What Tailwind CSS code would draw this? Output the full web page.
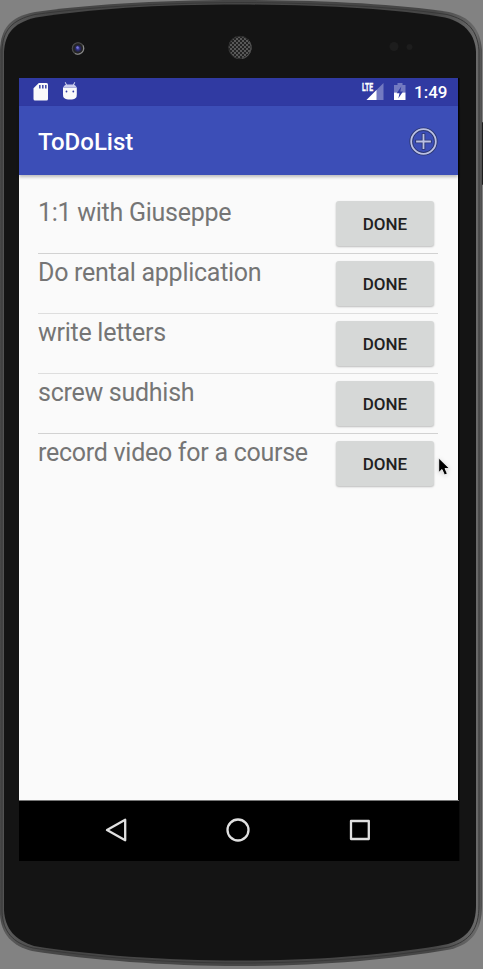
<!DOCTYPE html>
<html lang="en">
<head>
<meta charset="utf-8">
<title>ToDoList</title>
<script src="https://cdn.jsdelivr.net/npm/@tailwindcss/browser@4"></script>
</head>
<body class="relative w-[483px] h-[969px] overflow-hidden bg-[#828282] font-[Roboto,sans-serif]">
<!-- Phone body -->
<svg class="absolute inset-0" width="483" height="969" viewBox="0 0 483 969">
  <defs>
    <linearGradient id="rim" x1="0" x2="1" y1="0" y2="0">
      <stop offset="0" stop-color="#454545"/><stop offset=".012" stop-color="#5b5b5b"/><stop offset=".1" stop-color="#464646"/><stop offset=".9" stop-color="#464646"/><stop offset=".99" stop-color="#6a6a6a"/><stop offset="1" stop-color="#4b4b4b"/>
    </linearGradient>
    <pattern id="mesh" width="4" height="4" patternUnits="userSpaceOnUse"><rect width="4" height="4" fill="#585858"/><circle cx="1" cy="1" r="1" fill="#111"/><circle cx="3" cy="3" r="1" fill="#111"/></pattern>
    <radialGradient id="lens"><stop offset="0" stop-color="#5050b8"/><stop offset=".4" stop-color="#25255c"/><stop offset=".65" stop-color="#252525"/><stop offset="1" stop-color="#5a5a5a"/></radialGradient>
  </defs>
  <rect x="480" y="122" width="3" height="63" rx="1" fill="#1c1c1c"/>
  <path d="M0 50C1 29 9 17 35 12C85 5 150 .3 241 0C325 .3 395 4 449 12C470 17 480 28 482 50V905C482 931 472 944 450 949.500C390 960 315 966 240 966C165 966 90 960 32 951C12 946 1 934 0 914Z" fill="url(#rim)"/>
  <path d="M2 50C3 31 11 20 35 14.500C90 7 155 3 241 2.500C325 3 395 7 447 14.500C468 20 477 30 479 50V905C479 929 470 941 449 947C390 957 315 963 240 963C165 963 90 957 33 948C13 943 3 932 2 912Z" fill="none" stroke="#383838"/>
  <path d="M4 52C5 34 13 23 36 17.500C90 9 155 4.500 241 4.500C325 5 395 9 445 17.500C466 23 475 35 476 52V905C476 926 468 938 448 944C390 955 315 960.500 240 960.500C165 960.500 90 955 34 946C15 940 5 929 4 910Z" fill="#141414"/>
  <circle cx="78" cy="48.500" r="6.200" fill="url(#lens)"/>
  <path d="M83 45.500A6 6 0 0 1 75 53.500" fill="none" stroke="#8a8a8a" stroke-width="1.300"/>
  <circle cx="78" cy="48.500" r="4.300" fill="none" stroke="#242424" stroke-width="1.200"/>
  <circle cx="77.500" cy="47.500" r="1.200" fill="#7878dd"/>
  <circle cx="240" cy="47.500" r="11.500" fill="url(#mesh)"/>
  <circle cx="240" cy="47.500" r="11.200" fill="none" stroke="#2c2c2c"/>
  <path d="M249 41A11.200 11.200 0 0 1 242 58.500" fill="none" stroke="#555"/>
  <circle cx="394" cy="46.500" r="4.500" fill="#1d1d1d"/><circle cx="409.500" cy="47" r="3" fill="#1d1d1d"/>
  <rect x="458" y="78" width="1.500" height="783" fill="#050505"/>
</svg>

<main class="relative ml-[19px] mt-[78px] w-[439px] h-[783px] flex flex-col bg-[#fafafa]">
  <div class="h-7 shrink-0 flex items-center bg-[#303aa2] text-white">
    <svg class="ml-[14px]" width="48" height="28" viewBox="0 0 48 28" fill="#fafafa">
      <path d="M5.800 5H13.500Q15 5 15 6.500V21Q15 22.500 13.500 22.500H2Q.5 22.500 .5 21V10.200Z"/>
      <path d="M6 7h1.600v3.500H6zM9 7h1.600v3.500H9zM12 7h1.600v3.500H12z" fill="#4851ab"/>
      <path d="M30 9.500H43.800V16.500Q44 21 39 21.500H35Q29.800 21 30 16.500Z"/>
      <path d="M30 9.600Q31.500 6.500 34 6.500H40Q42.300 6.500 43.800 9.600Z" fill="#c9cced"/>
      <path d="M32.300 4.300l1.300 3M41.700 4.300l-1.300 3" stroke="#e5e6f5" stroke-width="1"/>
      <circle cx="33.500" cy="13.500" r=".9" fill="#303aa2"/><circle cx="40.300" cy="13.500" r=".9" fill="#303aa2"/>
    </svg>
    <div class="ml-auto flex items-center">
      <svg width="52" height="28" viewBox="0 0 52 28">
        <path d="M23.500 5V22H6.500Z" fill="#737ac1"/>
        <path d="M0 3.500H13.500V13H0Z" fill="#303aa2"/>
        <path d="M16.500 12V22H6.500Z" fill="#fff"/>
        <text x="2" y="12.800" font-family="Roboto, sans-serif" font-weight="700" font-size="11" textLength="11" lengthAdjust="spacingAndGlyphs" fill="#fff" stroke="#fff" stroke-width=".4">LTE</text>
        <path d="M37.500 5h5v2h3v7.500H34V7h3.500Z" fill="#737ac1"/>
        <path d="M34 14.500h11.500V22H34Z" fill="#fff"/>
        <path d="M41.300 8.500L36.700 15.300H39.500L38.300 20.500L43 13.500H40.300Z" fill="#303aa2"/>
      </svg>
      <span class="ml-[2px] mr-[10px] w-[34px] text-[17px] leading-7 font-medium whitespace-nowrap">1:49</span>
    </div>
  </div>

  <header class="relative z-10 h-[69px] shrink-0 flex items-center justify-between pt-px pl-[19px] pr-5 bg-[#3c4eb7] shadow-[0_2px_3px_rgba(0,0,0,0.25)]">
    <h1 class="pt-px text-[24px] leading-7 font-medium text-white">ToDoList</h1>
    <svg width="29" height="29" viewBox="0 0 29 29" fill="none" stroke-linecap="square">
      <g stroke="#2c3770" stroke-width="3.600"><circle cx="14.500" cy="14.500" r="12.300"/><path d="M14.500 8V21M8 14.500H21"/></g>
      <g stroke="#bbc1e4" stroke-width="1.800"><circle cx="14.500" cy="14.500" r="12.300"/><path d="M14.500 8V21M8 14.500H21"/></g>
    </svg>
  </header>

  <ul class="flex-1 pl-[19px] pr-5 pt-[19px] text-[25px] leading-8 tracking-[-0.27px] text-[#757575]">
    <li class="h-[60px] flex justify-between border-b border-[#d2d2d2] pt-[3px]"><span>1:1 with Giuseppe</span><button class="mt-1 mr-1 w-[98px] h-[45px] rounded-[3px] bg-[#d6d8d7] text-[17px] font-medium tracking-normal text-[#212121] shadow-[0_1px_2px_rgba(0,0,0,0.25)]">DONE</button></li>
    <li class="h-[60px] flex justify-between border-b border-[#dedede] pt-[3px]"><span>Do rental application</span><button class="mt-1 mr-1 w-[98px] h-[45px] rounded-[3px] bg-[#d6d8d7] text-[17px] font-medium tracking-normal text-[#212121] shadow-[0_1px_2px_rgba(0,0,0,0.25)]">DONE</button></li>
    <li class="h-[60px] flex justify-between border-b border-[#dedede] pt-[3px]"><span>write letters</span><button class="mt-1 mr-1 w-[98px] h-[45px] rounded-[3px] bg-[#d6d8d7] text-[17px] font-medium tracking-normal text-[#212121] shadow-[0_1px_2px_rgba(0,0,0,0.25)]">DONE</button></li>
    <li class="h-[60px] flex justify-between border-b border-[#d2d2d2] pt-[3px]"><span>screw sudhish</span><button class="mt-1 mr-1 w-[98px] h-[45px] rounded-[3px] bg-[#d6d8d7] text-[17px] font-medium tracking-normal text-[#212121] shadow-[0_1px_2px_rgba(0,0,0,0.25)]">DONE</button></li>
    <li class="h-[60px] flex justify-between pt-[3px]"><span>record video for a course</span><button class="mt-1 mr-1 w-[98px] h-[45px] rounded-[3px] bg-[#d6d8d7] text-[17px] font-medium tracking-normal text-[#212121] shadow-[0_1px_2px_rgba(0,0,0,0.25)]">DONE</button></li>
  </ul>

  <nav class="w-[440px] h-[61px] shrink-0 bg-black border-t border-[#777]">
    <svg width="440" height="60" viewBox="0 0 440 60" fill="none" stroke="#e0e0e0" stroke-width="2.300" stroke-linejoin="round">
      <path d="M88 29L106.200 18.700V39.300Z"/><circle cx="219" cy="29" r="10.500"/><rect x="332" y="20" width="17.800" height="18"/>
    </svg>
  </nav>
</main>

<!-- Mouse pointer -->
<svg class="absolute left-[436px] top-[456px] drop-shadow-sm" width="16" height="22" viewBox="0 0 16 22"><path d="M2.700 2V16.500L6 13.500L8.500 19L11.300 17.700L9 12.500H13.400Z" fill="#000" stroke="#fff" stroke-width=".8"/></svg>
</body>
</html>
